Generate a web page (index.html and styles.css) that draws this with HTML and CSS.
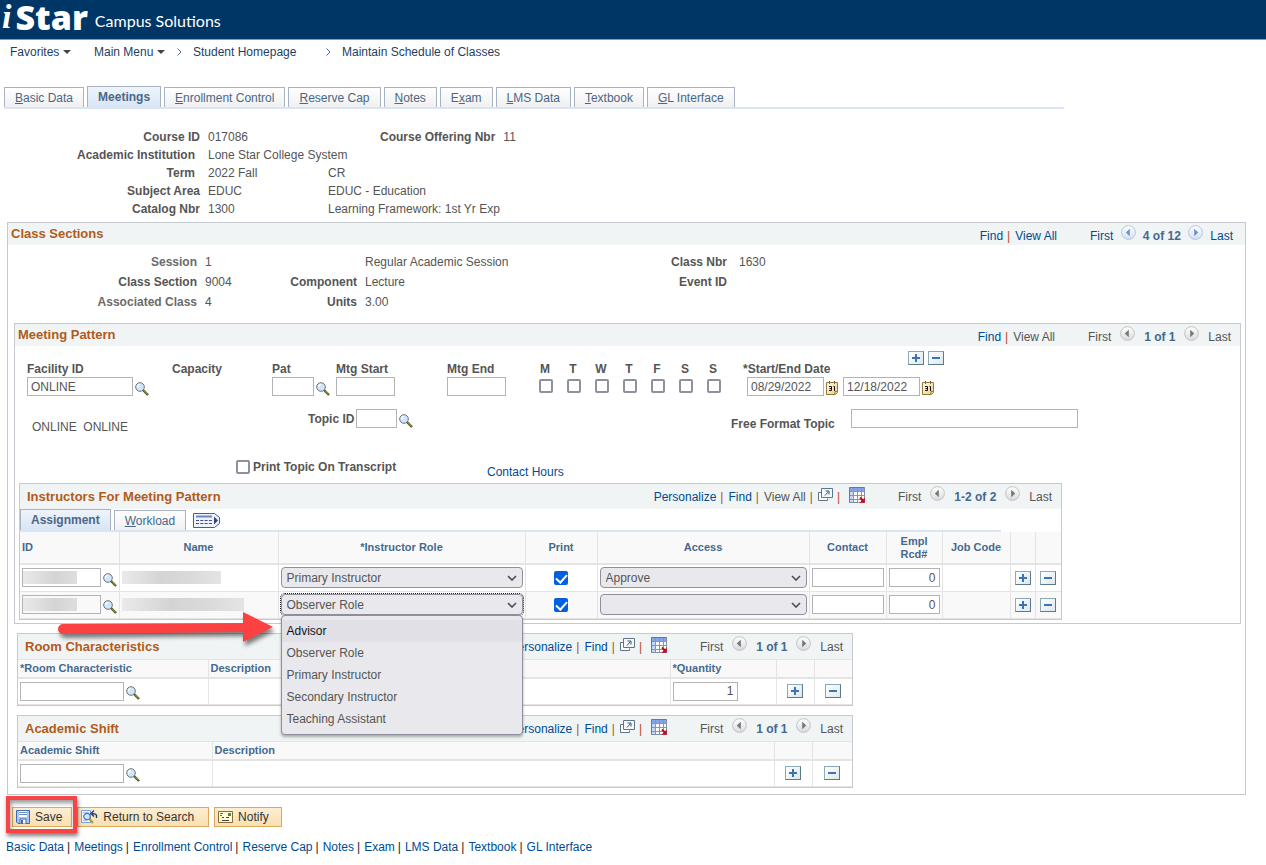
FILE: index.html
```html
<!DOCTYPE html>
<html lang="en">
<head>
	<title>Maintain Schedule of Classes</title>
	<meta charset="UTF-8">
	<meta name="viewport" content="width=device-width, initial-scale=1.0">
	<link rel="stylesheet" href="styles.css">
</head>
<body>

<!-- shared icons -->
<svg class="defs" width="0" height="0">
	<defs>
		<linearGradient id="gBall" x1="0" y1="0" x2="0" y2="1"><stop offset="0" stop-color="#fff"/><stop offset="1" stop-color="#d9dadb"/></linearGradient>
		<linearGradient id="gBallOn" x1="0" y1="0" x2="0" y2="1"><stop offset="0" stop-color="#fff"/><stop offset="1" stop-color="#d4e0f1"/></linearGradient>
		<linearGradient id="gCal" x1="0" y1="0" x2="1" y2="1"><stop offset="0" stop-color="#fffef0"/><stop offset="1" stop-color="#edc97c"/></linearGradient>
	</defs>
	<symbol id="i-lens" viewBox="0 0 14 14">
		<path d="M8 8l5 5" stroke="#55531f" stroke-width="2.400"/><path d="M9 8.600l3.600 3.600" stroke="#b9ad54" stroke-width="1"/>
		<circle cx="5" cy="5" r="4.300" fill="#cfe6fb" stroke="#6a707a" stroke-width="1"/>
		<path d="M2.600 5.400A2.600 2.600 0 0 1 5 2.400" fill="none" stroke="#fff" stroke-width="1.400"/>
	</symbol>
	<symbol id="i-cal" viewBox="0 0 12 14">
		<path d="M.5 1.500h11v10l-2 2h-9z" fill="url(#gCal)" stroke="#94783f"/>
		<path d="M3.500 0v3M8.500 0v3" stroke="#7c6a45"/>
		<path d="M9 13v-2.500h2.500" fill="#fff3c8" stroke="#94783f"/>
		<path d="M3 5.500h2.500v4H3M3.500 7.500h2M7.500 5.500h1v4.500" fill="none" stroke="#111" stroke-width="1"/>
	</symbol>
	<symbol id="i-prev" viewBox="0 0 15 15"><circle cx="7.500" cy="7.500" r="6.900" fill="url(#gBall)" stroke="#c2c2c4"/><path d="M8.800 3.800v7.400L4.800 7.500z" fill="#777"/></symbol>
	<symbol id="i-next" viewBox="0 0 15 15"><circle cx="7.500" cy="7.500" r="6.900" fill="url(#gBall)" stroke="#c2c2c4"/><path d="M6.200 3.800v7.400l4-3.700z" fill="#777"/></symbol>
	<symbol id="i-prev-on" viewBox="0 0 15 15"><circle cx="7.500" cy="7.500" r="6.900" fill="url(#gBallOn)" stroke="#b5c4dc"/><path d="M8.800 3.800v7.400L4.800 7.500z" fill="#6795cf"/></symbol>
	<symbol id="i-next-on" viewBox="0 0 15 15"><circle cx="7.500" cy="7.500" r="6.900" fill="url(#gBallOn)" stroke="#b5c4dc"/><path d="M6.200 3.800v7.400l4-3.700z" fill="#6795cf"/></symbol>
	<symbol id="i-pop" viewBox="0 0 15 13">
		<path d="M3.500 4.500h-3v8h9v-2" fill="#fff" stroke="#60758a"/>
		<path d="M3.500.5h11v9h-11z" fill="#f2f8fc" stroke="#60758a"/>
		<path d="M7 7.500l3.500-4M7.500 3H11v3.500" fill="none" stroke="#41566b" stroke-width="1"/>
	</symbol>
	<symbol id="i-grid" viewBox="0 0 16 16">
		<path d="M.5.5h15v15H.5z" fill="#fff" stroke="#7f8fa8"/>
		<path d="M1 1h14v3H1z" fill="#85a5ea"/><path d="M1 4h3v11H1z" fill="#c5d6f6"/>
		<path d="M1 4.500h14M1 8.500h14M1 12.500h14M4.500 1v14M8.500 1v14M12.500 1v14" stroke="#8b95a5"/>
		<path d="M.5 1v14.500M.5.5h15" stroke="#4f79c9"/>
		<path d="M11 10.500l3 3" stroke="#c30d17" stroke-width="2"/><path d="M15.800 10.500v5.300h-5.300z" fill="#c30d17"/>
	</symbol>
	<symbol id="i-chev" viewBox="0 0 10 6"><path d="M1 1l4 4 4-4" fill="none" stroke="#4c4c55" stroke-width="1.600"/></symbol>
</svg>

<header class="banner">
	<span class="logo-i">i</span><span class="logo-star">Star</span><span class="logo-sub">Campus Solutions</span>
</header>

<nav class="crumbs">
	<a href="#" class="c1">Favorites <i class="caret"></i></a>
	<a href="#" class="c2">Main Menu <i class="caret"></i></a>
	<svg width="5" height="8" viewBox="0 0 5 8"><path d="M.5.5L4 4 .5 7.500" fill="none" stroke="#45698f"/></svg>
	<a href="#" class="c3">Student Homepage</a>
	<svg width="5" height="8" viewBox="0 0 5 8"><path d="M.5.5L4 4 .5 7.500" fill="none" stroke="#45698f"/></svg>
	<a href="#" class="c4">Maintain Schedule of Classes</a>
</nav>

<nav class="tabs main-tabs">
	<a href="#"><u>B</u>asic Data</a>
	<a href="#" class="on">Meetings</a>
	<a href="#"><u>E</u>nrollment Control</a>
	<a href="#"><u>R</u>eserve Cap</a>
	<a href="#"><u>N</u>otes</a>
	<a href="#">E<u>x</u>am</a>
	<a href="#"><u>L</u>MS Data</a>
	<a href="#"><u>T</u>extbook</a>
	<a href="#"><u>G</u>L Interface</a>
</nav>

<main>
	<section class="keys">
		<b>Course ID</b><span>017086</span><span class="offering"><b>Course Offering Nbr</b>11</span>
		<b class="inset">Academic Institution</b><span class="wide">Lone Star College System</span>
		<b class="inset">Term</b><span>2022 Fall</span><span>CR</span>
		<b>Subject Area</b><span>EDUC</span><span>EDUC - Education</span>
		<b>Catalog Nbr</b><span>1300</span><span>Learning Framework: 1st Yr Exp</span>
	</section>

	<section class="box sections">
		<div class="bar top-bar">
			<h2>Class Sections</h2>
			<div class="pager">
				<div class="tools"><a href="#">Find</a><i>|</i><a href="#">View All</a></div>
				<div class="steps"><a href="#">First</a><a href="#" class="ball"><svg><use href="#i-prev-on"/></svg></a><b>4 of 12</b><a href="#" class="ball"><svg><use href="#i-next-on"/></svg></a><a href="#">Last</a></div>
			</div>
		</div>

		<div class="details">
			<b class="soft">Session</b><span>1</span><b></b><span>Regular Academic Session</span><b>Class Nbr</b><span class="last">1630</span>
			<b>Class Section</b><span>9004</span><b>Component</b><span>Lecture</span><b>Event ID</b><span></span>
			<b class="soft">Associated Class</b><span>4</span><b>Units</b><span>3.00</span><b></b><span></span>
		</div>

		<section class="box meeting">
			<div class="bar">
				<h2>Meeting Pattern</h2>
				<div class="pager">
					<div class="tools"><a href="#">Find</a><i>|</i><span>View All</span></div>
					<div class="steps"><span>First</span><span class="ball"><svg><use href="#i-prev"/></svg></span><b>1 of 1</b><span class="ball"><svg><use href="#i-next"/></svg></span><span>Last</span></div>
				</div>
			</div>

			<div class="pattern">
				<div class="fld w-fac"><label for="fac">Facility ID</label><div class="ctl"><input type="text" id="fac" value="ONLINE"><button class="ico" aria-label="Look up facility"><svg><use href="#i-lens"/></svg></button></div></div>
				<div class="fld w-cap"><b>Capacity</b></div>
				<div class="fld w-pat"><label for="pat">Pat</label><div class="ctl"><input type="text" id="pat"><button class="ico" aria-label="Look up pattern"><svg><use href="#i-lens"/></svg></button></div></div>
				<div class="fld w-start"><label for="mstart">Mtg Start</label><div class="ctl"><input type="text" id="mstart"></div></div>
				<div class="fld w-end"><label for="mend">Mtg End</label><div class="ctl"><input type="text" id="mend"></div></div>
				<div class="fld day"><label for="d1">M</label><div class="ctl"><input type="checkbox" id="d1"></div></div>
				<div class="fld day"><label for="d2">T</label><div class="ctl"><input type="checkbox" id="d2"></div></div>
				<div class="fld day"><label for="d3">W</label><div class="ctl"><input type="checkbox" id="d3"></div></div>
				<div class="fld day"><label for="d4">T</label><div class="ctl"><input type="checkbox" id="d4"></div></div>
				<div class="fld day"><label for="d5">F</label><div class="ctl"><input type="checkbox" id="d5"></div></div>
				<div class="fld day"><label for="d6">S</label><div class="ctl"><input type="checkbox" id="d6"></div></div>
				<div class="fld day"><label for="d7">S</label><div class="ctl"><input type="checkbox" id="d7"></div></div>
				<div class="fld dates">
					<div class="dates-top"><label for="sdate">*Start/End Date</label><button class="pm plus" aria-label="Add row"></button><button class="pm" aria-label="Delete row"></button></div>
					<div class="ctl"><input type="text" id="sdate" value="08/29/2022"><button class="ico cal" aria-label="Choose start date"><svg><use href="#i-cal"/></svg></button><input type="text" value="12/18/2022" aria-label="End date"><button class="ico cal" aria-label="Choose end date"><svg><use href="#i-cal"/></svg></button></div>
				</div>
			</div>

			<div class="topic">
				<span class="room">ONLINE&nbsp; ONLINE</span>
				<div class="topic-id"><label for="topic">Topic ID</label><input type="text" id="topic"><button class="ico" aria-label="Look up topic"><svg><use href="#i-lens"/></svg></button></div>
				<label for="free" class="free">Free Format Topic</label><input type="text" id="free">
			</div>

			<div class="transcript">
				<input type="checkbox" id="ptt"><label for="ptt">Print Topic On Transcript</label>
				<a href="#">Contact Hours</a>
			</div>

			<section class="box grid-box instructors">
				<div class="bar">
					<h2>Instructors For Meeting Pattern</h2>
					<div class="pager">
						<div class="tools"><a href="#">Personalize</a><i>|</i><a href="#">Find</a><i>|</i><span>View All</span><i>|</i><a href="#" class="pop" aria-label="Zoom"><svg><use href="#i-pop"/></svg></a><i>|</i><a href="#" class="xls" aria-label="Download"><svg><use href="#i-grid"/></svg></a></div>
						<div class="steps"><span>First</span><span class="ball"><svg><use href="#i-prev"/></svg></span><b>1-2 of 2</b><span class="ball"><svg><use href="#i-next"/></svg></span><span>Last</span></div>
					</div>
				</div>
				<nav class="tabs">
					<a href="#" class="on">Assignment</a>
					<a href="#"><u>W</u>orkload</a>
					<button class="showall" aria-label="Show all columns"><svg width="27" height="15" viewBox="0 0 27 15"><path d="M.5.5h21l5 4v6l-5 4H.5z" fill="#eef2fd" stroke="#4a5b96"/><path d="M3 3.500h16" stroke="#6d86c8" stroke-width="2"/><path d="M3 7.500h16M3 10.500h16" stroke="#3f4f86" stroke-dasharray="3 1.300"/><path d="M21 3.500v8l4-4z" fill="#34437c"/></svg></button>
				</nav>
				<table>
					<colgroup><col class="k1"><col class="k2"><col class="k3"><col class="k4"><col class="k5"><col class="k6"><col class="k7"><col class="k8"><col class="k9"><col></colgroup>
					<thead>
						<tr><th class="left">ID</th><th>Name</th><th>*Instructor Role</th><th>Print</th><th>Access</th><th>Contact</th><th>Empl Rcd#</th><th>Job Code</th><th></th><th></th></tr>
					</thead>
					<tbody>
						<tr>
							<td><div class="ctl"><input type="text" class="hid" aria-label="ID"><button class="ico" aria-label="Look up ID"><svg><use href="#i-lens"/></svg></button></div></td>
							<td><span class="smudge"></span></td>
							<td><div class="sel"><select aria-label="Instructor Role"><option>Primary Instructor</option></select><svg><use href="#i-chev"/></svg></div></td>
							<td class="mid"><input type="checkbox" checked aria-label="Print"></td>
							<td><div class="sel"><select aria-label="Access"><option>Approve</option></select><svg><use href="#i-chev"/></svg></div></td>
							<td><input type="text" class="full" aria-label="Contact"></td>
							<td><input type="text" class="full num" value="0" aria-label="Empl Rcd#"></td>
							<td></td>
							<td class="mid"><button class="pm plus" aria-label="Add row"></button></td>
							<td class="mid"><button class="pm" aria-label="Delete row"></button></td>
						</tr>
						<tr>
							<td><div class="ctl"><input type="text" class="hid" aria-label="ID"><button class="ico" aria-label="Look up ID"><svg><use href="#i-lens"/></svg></button></div></td>
							<td><span class="smudge long"></span></td>
							<td>
								<div class="sel open"><select aria-label="Instructor Role"><option>Observer Role</option></select><svg><use href="#i-chev"/></svg>
									<ul class="menu" role="listbox">
										<li role="option" class="hover">Advisor</li>
										<li role="option">Observer Role</li>
										<li role="option">Primary Instructor</li>
										<li role="option">Secondary Instructor</li>
										<li role="option">Teaching Assistant</li>
									</ul>
								</div>
							</td>
							<td class="mid"><input type="checkbox" checked aria-label="Print"></td>
							<td><div class="sel"><select aria-label="Access"><option></option></select><svg><use href="#i-chev"/></svg></div></td>
							<td><input type="text" class="full" aria-label="Contact"></td>
							<td><input type="text" class="full num" value="0" aria-label="Empl Rcd#"></td>
							<td></td>
							<td class="mid"><button class="pm plus" aria-label="Add row"></button></td>
							<td class="mid"><button class="pm" aria-label="Delete row"></button></td>
						</tr>
					</tbody>
				</table>
			</section>
			<svg class="arrow" width="226" height="42" viewBox="0 0 226 42"><path d="M8 13L188 12V1l30 15-30 15V21L8 23a5 5 0 0 1 0-10z" fill="#fb4141"/></svg>
		</section>

		<section class="box grid-box small">
			<div class="bar">
				<h2>Room Characteristics</h2>
				<div class="pager">
					<div class="tools"><a href="#">Personalize</a><i>|</i><a href="#">Find</a><i>|</i><a href="#" class="pop" aria-label="Zoom"><svg><use href="#i-pop"/></svg></a><i>|</i><a href="#" class="xls" aria-label="Download"><svg><use href="#i-grid"/></svg></a></div>
					<div class="steps"><span>First</span><span class="ball"><svg><use href="#i-prev"/></svg></span><b>1 of 1</b><span class="ball"><svg><use href="#i-next"/></svg></span><span>Last</span></div>
				</div>
			</div>
			<table>
				<colgroup><col class="r1"><col><col class="r3"><col class="r4"><col class="r4"></colgroup>
				<thead><tr><th class="left">*Room Characteristic</th><th class="left">Description</th><th class="left">*Quantity</th><th></th><th></th></tr></thead>
				<tbody><tr>
					<td><div class="ctl"><input type="text" class="look" aria-label="Room Characteristic"><button class="ico" aria-label="Look up room characteristic"><svg><use href="#i-lens"/></svg></button></div></td>
					<td></td>
					<td><input type="text" class="qty num" value="1" aria-label="Quantity"></td>
					<td class="mid"><button class="pm plus" aria-label="Add row"></button></td>
					<td class="mid"><button class="pm" aria-label="Delete row"></button></td>
				</tr></tbody>
			</table>
		</section>

		<section class="box grid-box small">
			<div class="bar">
				<h2>Academic Shift</h2>
				<div class="pager">
					<div class="tools"><a href="#">Personalize</a><i>|</i><a href="#">Find</a><i>|</i><a href="#" class="pop" aria-label="Zoom"><svg><use href="#i-pop"/></svg></a><i>|</i><a href="#" class="xls" aria-label="Download"><svg><use href="#i-grid"/></svg></a></div>
					<div class="steps"><span>First</span><span class="ball"><svg><use href="#i-prev"/></svg></span><b>1 of 1</b><span class="ball"><svg><use href="#i-next"/></svg></span><span>Last</span></div>
				</div>
			</div>
			<table>
				<colgroup><col class="s1"><col><col class="r4"><col class="s4"></colgroup>
				<thead><tr><th class="left">Academic Shift</th><th class="left">Description</th><th></th><th></th></tr></thead>
				<tbody><tr>
					<td><div class="ctl"><input type="text" class="look" aria-label="Academic Shift"><button class="ico" aria-label="Look up academic shift"><svg><use href="#i-lens"/></svg></button></div></td>
					<td></td>
					<td class="mid"><button class="pm plus" aria-label="Add row"></button></td>
					<td class="mid"><button class="pm" aria-label="Delete row"></button></td>
				</tr></tbody>
			</table>
		</section>
	</section>

	<div class="actions">
		<div class="marked"><button class="act save"><svg width="14" height="14" viewBox="0 0 14 14"><path d="M.5.5h13v13H2l-1.500-1.500z" fill="#a9c6f2" stroke="#3c68b4"/><path d="M3 1h8v6H3z" fill="#fff"/><path d="M3 2.500h8M3 4.500h8" stroke="#6c8fca"/><path d="M4 9h6v5H4z" fill="#fff" stroke="#3c68b4"/><path d="M5 10h2v4H5z" fill="#3c68b4"/></svg>Save</button></div>
		<button class="act back"><svg width="17" height="14" viewBox="0 0 17 14"><path d="M.5.5h9v12h-9z" fill="#eef4fd" stroke="#7ba0da"/><path d="M2 2.500h6M2 10.500h4" stroke="#a9c2e8"/><circle cx="6" cy="6.500" r="3.200" fill="#cfe6fb" stroke="#5079ae" stroke-width="1.200"/><path d="M8.500 9l3.500 4" stroke="#b39a28" stroke-width="2"/><path d="M15.500 8V5.500Q15 3.500 11 3.500M13 .5l-3 3 3 3" fill="none" stroke="#263f73" stroke-width="1.400"/></svg>Return to Search</button>
		<button class="act note"><svg width="15" height="12" viewBox="0 0 15 12"><path d="M.5.5h14v11H.5z" fill="#fffbd2" stroke="#8a6a38"/><path d="M2 2.500h3M2 4.500h2" stroke="#b3473a"/><path d="M10 2h3v3h-3z" fill="#4f8a3c"/><path d="M4 6.500h2M8 6.500h3M4 9.500h7" stroke="#444"/></svg>Notify</button>
	</div>

	<footer>
		<a href="#">Basic Data</a><i>|</i><a href="#">Meetings</a><i>|</i><a href="#">Enrollment Control</a><i>|</i><a href="#">Reserve Cap</a><i>|</i><a href="#">Notes</a><i>|</i><a href="#">Exam</a><i>|</i><a href="#">LMS Data</a><i>|</i><a href="#">Textbook</a><i>|</i><a href="#">GL Interface</a>
	</footer>
</main>
</body>
</html>
```

FILE: styles.css
```css
*{
box-sizing: border-box;
}
body{
margin: 0;
font: 12px/14px "Liberation Sans", Arial, sans-serif;
color: #555;
background: #fff;
}
a{
color: #004b91;
text-decoration: none;
}
i{
font-style: normal;
}
input, select, button{
font: inherit;
color: inherit;
margin: 0;
}
.defs{
position: absolute;
}

/* top */
.banner{
height: 40px;
background: #003666;
border-bottom: 1px solid #7c9cc9;
color: #fff;
display: flex;
align-items: center;
padding-left: 2px;
}
.logo-i{
font: italic bold 34px/40px "Liberation Serif", serif;
margin: -5px 4px 0 0;
}
.logo-star{
font: 800 34px/48px "Open Sans", sans-serif;
margin-top: -5px;
}
.logo-sub{
font: 16px/20px Lato, sans-serif;
margin: 3px 0 0 7px;
}
.crumbs{
display: flex;
align-items: center;
height: 24px;
padding-left: 10px;
}
.crumbs a{
color: #1c3f63;
}
.caret{
display: inline-block;
border: 4px solid transparent;
border-top-color: #444;
border-bottom: 0;
vertical-align: 2px;
}
.c1{ width: 84px; }
.c2{ width: 83px; }
.c3{ width: 133px; }
.crumbs svg + a{
margin-left: 11px;
}
.tabs{
display: flex;
align-items: flex-end;
gap: 3px;
border-bottom: 2px solid #d9e5f4;
}
.tabs a{
color: #4a6788;
height: 20px;
line-height: 20px;
padding: 0 10px;
border: 1px solid #a7b3c2;
border-bottom: 0;
background: linear-gradient(#fff, #f0f0f0);
}
.tabs a.on{
height: 21px;
font-weight: bold;
background: linear-gradient(#eef4fb, #d9e5f4);
}
.main-tabs{
margin: 22px 202px 0 4px;
}

main{
padding: 0 20px 0 7px;
}
.keys{
display: grid;
grid-template-columns: 193px 112px auto;
column-gap: 8px;
grid-auto-rows: 18px;
line-height: 18px;
padding: 19px 0 4px;
}
.keys > b{
text-align: right;
}
.keys .inset{
padding-right: 5px;
}
.keys .wide{
grid-column: 2 / 4;
}
.offering{
padding-left: 52px;
}
.offering b{
margin-right: 8px;
}

/* boxes */
.box{
border: 1px solid #c5cad1;
}
.bar{
display: flex;
justify-content: space-between;
height: 22px;
background: #f0f4f5;
padding: 0 9px 0 3px;
}
.top-bar{
padding-right: 12px;
}
h2{
margin: 0;
font-size: 13px;
line-height: 22px;
color: #b15b1a;
}
.pager, .tools, .steps{
display: flex;
}
.pager{
line-height: 26px;
}
.tools i{
color: #b5491c;
margin: 0 5px 0 4px;
}
.tools svg, .steps svg{
display: block;
width: 15px;
height: 15px;
}
.steps{
justify-content: space-between;
width: 143px;
margin-left: 33px;
}
.steps b{
color: #45698f;
}
.ball{
padding-top: 2px;
}
.sections{
padding-bottom: 6px;
}
.details{
display: grid;
grid-template-columns: 189px 72px 72px 298px 56px auto;
column-gap: 8px;
grid-auto-rows: 20px;
line-height: 20px;
padding: 7px 0 11px;
}
.details b{
text-align: right;
white-space: nowrap;
}
.details .last{
padding-left: 4px;
}
.soft{
color: #6b6b6b;
}

/* controls */
input[type=text]{
height: 19px;
border: 1px solid #b3b3b3;
padding: 0 3px;
background: #fff;
border-radius: 0;
}
input[type=checkbox]{
appearance: none;
width: 14px;
height: 14px;
border: 2px solid #8f8f9d;
border-radius: 2px;
background: #fff;
flex: none;
}
input[type=checkbox]:checked{
border-color: #0060df;
background: #0060df;
display: block;
}
input[type=checkbox]:checked::after{
content: "";
display: block;
width: 5px;
height: 9px;
margin: -1px 0 0 2px;
border: solid #fff;
border-width: 0 2px 2px 0;
transform: rotate(42deg);
}
.ctl{
display: flex;
}
.ico{
border: 0;
background: none;
padding: 4px 0 0 2px;
height: 19px;
}
.ico svg{
display: block;
width: 14px;
height: 14px;
}
.cal{
padding: 3px 5px 0 2px;
}
.cal svg{
width: 12px;
}
.pm{
display: block;
flex: none;
width: 16px;
height: 14px;
padding: 0;
border: 1px solid #7b98a5;
border-color: #8ba9b7 #5d7a88 #5d7a88 #8ba9b7;
background: linear-gradient(#3b72b8, #3b72b8) center / 8px 2px no-repeat, linear-gradient(135deg, #fff, #dde7ea);
}
.plus{
background: linear-gradient(#3b72b8, #3b72b8) center / 8px 2px no-repeat, linear-gradient(#3b72b8, #3b72b8) center / 2px 8px no-repeat, linear-gradient(135deg, #fff, #dde7ea);
}

/* meeting pattern */
.meeting{
position: relative;
margin: 0 4px 0 6px;
padding-bottom: 3px;
}
.pattern{
display: flex;
padding: 5px 0 0 12px;
}
.fld > label, .fld > b{
display: block;
height: 26px;
padding-top: 11px;
font-weight: bold;
}
.w-fac{ width: 145px; }
.w-fac input{ width: 106px; }
.w-cap{ width: 100px; }
.w-pat{ width: 64px; }
.w-pat input{ width: 42px; }
.w-start{ width: 111px; }
.w-end{ width: 92px; }
.w-start input, .w-end input{ width: 59px; }
.day{ width: 28px; }
.day .ctl{ padding-top: 2px; }
.fld.day label{
width: 14px;
text-align: center;
padding-right: 2px;
}
.dates{
padding-left: 12px;
}
.dates input{
width: 77px;
}
.dates-top{
display: flex;
gap: 4px;
height: 26px;
margin-left: -4px;
}
.dates-top label{
width: 161px;
padding-top: 11px;
font-weight: bold;
}
.topic{
display: grid;
grid-template-columns: 272px 427px 115px 232px;
align-items: start;
padding: 13px 0 0 17px;
}
.room{
padding-top: 11px;
}
.topic-id{
display: flex;
align-items: center;
padding-left: 4px;
}
.topic-id input{
width: 41px;
margin-left: 2px;
}
.topic label, .transcript label{
font-weight: bold;
}
.free{
padding-top: 8px;
}
#free{
margin-left: 5px;
width: 227px;
}
.transcript{
display: flex;
padding: 26px 0 4px 221px;
}
.transcript label{
width: 234px;
margin-left: 3px;
}
.transcript a{
padding-top: 5px;
}

/* grids */
.grid-box .bar{
height: 25px;
padding-left: 7px;
}
.grid-box h2{
line-height: 26px;
}
.instructors{
width: 1043px;
max-width: 100%;
margin-left: 4px;
}
.instructors .steps{
width: 154px;
}
.instructors .tabs{
height: 23px;
margin-right: 60px;
}
.showall{
border: 0;
padding: 0;
background: none;
margin: 0 0 2px 4px;
}
.showall svg{
display: block;
}
.pop{
padding-top: 4px;
}
.pop svg{
height: 13px;
}
.xls{
padding: 3px 0 0 4px;
}
.xls svg{
width: 16px;
height: 16px;
}
table{
width: 100%;
table-layout: fixed;
border-collapse: collapse;
}
th{
font-size: 11px;
line-height: 13px;
color: #45698f;
background: #f9f9f9;
height: 19px;
padding: 0 4px;
border-right: 1px solid #e4e4e4;
border-top: 1px solid #e4e4e4;
border-bottom: 2px solid #e4e4e4;
}
.left{
text-align: left;
padding: 0 2px;
}
td{
height: 27px;
padding: 0 2px;
border-right: 1px solid #e4e4e4;
border-bottom: 1px solid #e4e4e4;
}
th:last-child, td:last-child{
border-right: 0;
}
tbody tr:nth-child(2){
background: #f9f9f9;
}
.instructors th{
height: 32px;
border-top: 0;
}
.k1{ width: 99px; }
.k2{ width: 159px; }
.k3{ width: 247px; }
.k4{ width: 72px; }
.k5{ width: 212px; }
.k6{ width: 77px; }
.k7{ width: 56px; }
.k8{ width: 68px; }
.k9{ width: 25px; }
.mid .pm, .mid input{
margin: 0 auto;
}
input.hid{
width: 79px;
background: linear-gradient(90deg, #e9e9e9, #d4d4d4 60%, #dedede) 0 50% / 54px 13px no-repeat;
}
.smudge{
display: block;
width: 99px;
height: 13px;
background: linear-gradient(90deg, #eaeaea, #d4d4d4 40%, #dadada 70%, #e4e4e4);
}
.long{
width: 122px;
}
input.full{
display: block;
width: 100%;
}
input.num{
text-align: right;
}
input.look{
width: 104px;
}
input.qty{
display: block;
width: 65px;
}
.sel{
position: relative;
width: 242px;
max-width: 100%;
}
select{
appearance: none;
display: block;
width: 100%;
height: 21px;
padding: 0 5px;
background: #e9e9ed;
border: 1px solid #8f8f9d;
border-radius: 4px;
}
.sel > svg{
position: absolute;
right: 6px;
top: 8px;
width: 10px;
height: 6px;
}
.open select{
outline: 1px dotted #222;
}
.menu{
position: absolute;
z-index: 3;
top: 100%;
left: 0;
right: 0;
margin: 0;
padding: 4px 0;
list-style: none;
line-height: 22px;
background: #e9e9ed;
border: 1px solid #8f8f9d;
border-radius: 4px;
box-shadow: 0 2px 3px rgba(0, 0, 0, 0.3);
}
.menu li{
padding: 0 5px;
}
.menu .hover{
background: #e0e0e6;
color: #15141a;
}
.arrow{
position: absolute;
z-index: 2;
left: 40px;
bottom: -30px;
filter: drop-shadow(2px 4px 2px rgba(0, 0, 0, 0.5));
}
.small{
width: 836px;
max-width: 100%;
margin: 9px 0 0 9px;
}
.small td{
height: 26px;
}
.r1{ width: 190px; }
.r3{ width: 106px; }
.r4{ width: 38px; }
.s1{ width: 194px; }
.s4{ width: 40px; }

/* bottom */
.actions{
display: flex;
gap: 5px;
padding-top: 12px;
margin-left: 5px;
}
.marked{
position: relative;
}
.marked::after{
content: "";
position: absolute;
inset: -11px -5px -6px -6px;
border: 4px solid #f84444;
box-shadow: 1px 3px 4px rgba(0, 0, 0, 0.5), inset 1px 3px 4px rgba(0, 0, 0, 0.4);
}
.act{
display: flex;
align-items: center;
height: 20px;
padding: 0 9px 0 3px;
border: 1px solid #dcaa5c;
background: linear-gradient(#fdeed2, #f9dfb2);
color: #333;
}
.act svg{
margin-right: 5px;
}
.back{
padding-right: 14px;
}
.note{
padding-right: 12px;
}
footer{
display: flex;
padding: 13px 0;
margin-left: -1px;
}
footer i{
color: #222;
margin: 0 4px 0 3px;
}
```
